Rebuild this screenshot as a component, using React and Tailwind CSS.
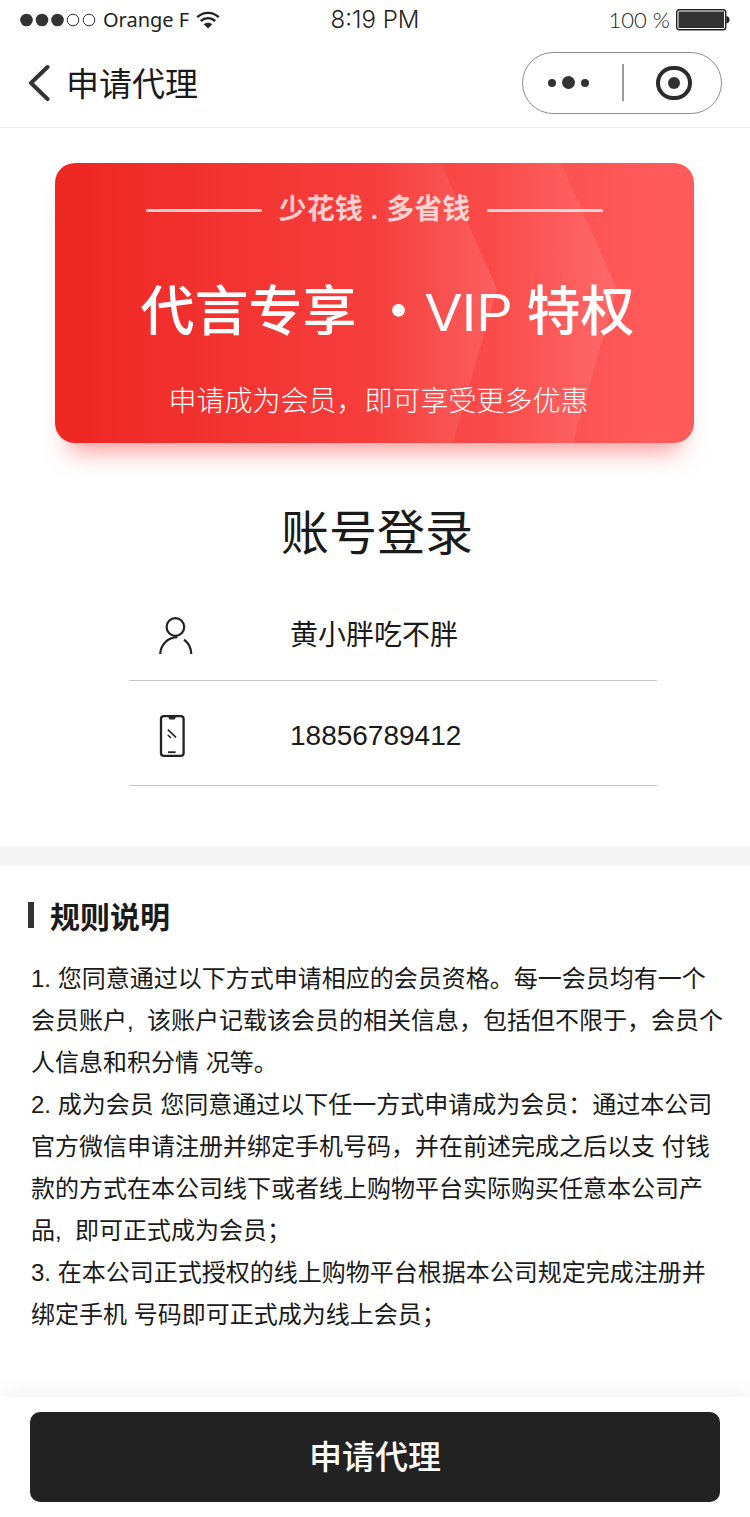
import { useState } from "react";

const rules = [
  "1. 您同意通过以下方式申请相应的会员资格。每一会员均有一个会员账户,\u00a0 该账户记载该会员的相关信息，包括但不限于，会员个人信息和积分情 况等。",
  "2. 成为会员 您同意通过以下任一方式申请成为会员：通过本公司官方微信申请注册并绑定手机号码，并在前述完成之后以支 付钱款的方式在本公司线下或者线上购物平台实际购买任意本公司产品,\u00a0 即可正式成为会员；",
  "3. 在本公司正式授权的线上购物平台根据本公司规定完成注册并绑定手机 号码即可正式成为线上会员；",
];

const StatusBar = () => (
  <div className="grid h-10 grid-cols-[1fr_auto_1fr] items-center pl-5 pr-5 text-[#222]">
    <div className="flex items-center gap-[7px]">
      <svg width="76" height="14" viewBox="0 0 76 14" aria-hidden="true">
        <circle cx="6.5" cy="7" r="6.3" fill="#333" />
        <circle cx="22" cy="7" r="6.3" fill="#333" />
        <circle cx="37.5" cy="7" r="6.3" fill="#333" />
        <circle cx="53" cy="7" r="5.8" fill="none" stroke="#333" />
        <circle cx="69" cy="7" r="5.8" fill="none" stroke="#333" />
      </svg>
      <span className="font-['Noto_Sans',sans-serif] text-[20px] leading-8">
        Orange F
      </span>
      <svg width="24" height="18" viewBox="0 0 24 18" aria-hidden="true">
        <g fill="none" stroke="#222" strokeWidth="2.4">
          <path d="M1.2 6.2C7.4 .4 16.6 .4 22.8 6.2" />
          <path d="M4.8 10C9 6.2 15 6.2 19.2 10" />
        </g>
        <path d="M7.8 13.2C10.2 11.2 13.8 11.2 16.2 13.2L12 17.6Z" fill="#222" />
      </svg>
    </div>
    <span className="font-['Inter',sans-serif] text-2xl font-light">8:19 PM</span>
    <div className="flex items-center justify-end gap-[5px]">
      <span className="font-['Lato',sans-serif] text-[22px] font-light leading-8">
        100 %
      </span>
      <svg width="55" height="22" viewBox="0 0 55 22" aria-hidden="true">
        <rect x="1.7" y=".7" width="49" height="20" rx="2.5" fill="#fff" stroke="#222" strokeWidth="1.4" />
        <rect x="3.5" y="2.5" width="45.5" height="16.5" fill="#333" />
        <path d="M51.4 7C55.6 7.4 55.6 14 51.4 14.4Z" fill="#222" />
      </svg>
    </div>
  </div>
);

const NavBar = () => (
  <header className="flex h-[88px] items-center justify-between border-b border-[#ececec] pb-[2px] pl-7 pr-7">
    <div className="flex items-center gap-4">
      <button type="button" aria-label="返回" onClick={() => window.history.back()}>
        <svg width="22" height="38" viewBox="0 0 22 38" aria-hidden="true">
          <path d="M19.5 3L3 19L19.5 35" fill="none" stroke="#333" strokeWidth="4" strokeLinecap="round" strokeLinejoin="round" />
        </svg>
      </button>
      <h1 className="pt-1 text-[33px] leading-10">申请代理</h1>
    </div>
    <div className="flex h-[62px] w-[200px] items-center rounded-full border border-[#8c8c8c]">
      <button type="button" aria-label="更多" className="flex w-[99px] items-center justify-center gap-[6px] pr-2">
        <span className="size-2 rounded-full bg-[#333]" />
        <span className="size-[13px] rounded-full bg-[#333]" />
        <span className="size-2 rounded-full bg-[#333]" />
      </button>
      <span className="h-[37px] w-[2px] bg-[#9b9b9b]" />
      <button type="button" aria-label="关闭" className="flex flex-1 justify-center pl-[2px]">
        <span className="flex h-[34px] w-9 items-center justify-center rounded-full border-4 border-[#2b2b2b]">
          <span className="size-3 rounded-full bg-[#333]" />
        </span>
      </button>
    </div>
  </header>
);

const Banner = () => (
  <section className="relative ml-[55px] mr-[56px] mt-[35px] flex flex-col items-center rounded-[20px] bg-linear-to-r from-[#ef2824] from-5% via-[#f63e3d] via-50% to-[#ff5b5b] to-95% pb-[21px] pt-[27px] text-white shadow-[0_22px_24px_-14px_rgba(244,50,50,0.5)]">
    <svg className="absolute right-0 top-0 h-full" width="639" height="280" viewBox="0 0 639 280" aria-hidden="true">
      <defs>
        <linearGradient id="arrow" x1="0" x2="1" y1="0" y2="0">
          <stop offset="0.2" stopColor="#fff" stopOpacity="0" />
          <stop offset="1" stopColor="#fff" stopOpacity="0.11" />
        </linearGradient>
      </defs>
      <path d="M286 0H386L442 126L398 280H286Z" fill="url(#arrow)" />
      <path d="M406 0H506L562 126L518 280H406Z" fill="url(#arrow)" />
    </svg>
    <div className="relative flex items-center gap-[17px]">
      <span className="h-[3px] w-[116px] rounded-full bg-white/75" />
      <p className="text-[28px] font-bold leading-10 text-white/75">少花钱 . 多省钱</p>
      <span className="h-[3px] w-[116px] rounded-full bg-white/75" />
    </div>
    <h2 className="relative mt-[42px] pl-[26px] text-[54px] font-medium leading-[80px]">
      代言专享 ・VIP 特权
    </h2>
    <p className="relative mt-[30px] pl-2 text-[28px] font-light leading-10">
      申请成为会员，即可享受更多优惠
    </p>
  </section>
);

const UserIcon = () => (
  <svg width="34" height="38" viewBox="0 0 34 38" fill="none" stroke="#222" strokeWidth="2.2" aria-hidden="true">
    <circle cx="16.4" cy="10" r="8.8" />
    <path d="M1.2 37C1.6 28 8.5 20.4 18.4 20.2" />
    <path d="M25 22.6C29.6 26 32.2 31 32.3 37" />
  </svg>
);

const PhoneIcon = () => (
  <svg width="34" height="42" viewBox="0 0 34 42" fill="none" stroke="#222" strokeWidth="2.3" aria-hidden="true">
    <rect x="2" y="1.2" width="22.6" height="39.6" rx="2.8" />
    <path d="M9.2 1.5H17L15.8 4.4H10.4Z" fill="#222" stroke="none" />
    <path d="M9 37.2H16.6" strokeWidth="1.8" />
    <path d="M8.8 14.6L17 22.4M8.8 20L12 23" strokeWidth="1.6" />
  </svg>
);

export default function App() {
  const [name, setName] = useState("黄小胖吃不胖");
  const [phone, setPhone] = useState("18856789412");

  const handleSubmit = (event) => {
    event.preventDefault();
  };

  return (
    <div className="bg-white font-['Liberation_Sans','Noto_Sans_CJK_SC',sans-serif] text-[#1a1a1a]" lang="zh-CN">
      <StatusBar />
      <NavBar />
      <Banner />

      <form id="apply" onSubmit={handleSubmit} className="pb-[60px] pl-[129px] pr-[93px] pt-[60px]">
        <h2 className="pr-8 text-center text-5xl leading-[62px]">账号登录</h2>
        <div className="mt-[26px] flex h-[90px] items-center border-b border-[#c9c9c9] pl-[30px]">
          <label htmlFor="name" aria-label="姓名">
            <UserIcon />
          </label>
          <input
            id="name"
            type="text"
            className="ml-[97px] min-w-0 flex-1 text-[28px] leading-10 outline-none"
            value={name}
            onChange={(e) => setName(e.target.value)}
          />
        </div>
        <div className="flex h-[105px] items-center border-b border-[#c9c9c9] pl-[30px] pt-[6px]">
          <label htmlFor="phone" aria-label="手机号">
            <PhoneIcon />
          </label>
          <input
            id="phone"
            type="tel"
            className="ml-[97px] min-w-0 flex-1 text-[28px] leading-10 outline-none"
            value={phone}
            onChange={(e) => setPhone(e.target.value)}
          />
        </div>
      </form>

      <div className="h-5 bg-[#f4f4f4]" />

      <section className="pb-[61px] pl-7 pr-6 pt-[31px]">
        <div className="flex items-start gap-4">
          <span className="mt-[5px] h-[26px] w-[6px] bg-[#333]" />
          <h2 className="text-[30px] font-bold leading-[42px]">规则说明</h2>
        </div>
        <div className="mt-[19px] pl-[3px] text-2xl leading-[42px]">
          {rules.map((rule) => (
            <p key={rule}>{rule}</p>
          ))}
        </div>
      </section>

      <footer className="bg-white px-[30px] py-[15px] shadow-[0_-4px_20px_rgba(0,0,0,0.06)]">
        <button
          type="submit"
          form="apply"
          className="h-[90px] w-full rounded-[10px] bg-[#222] pt-[2px] text-[33px] font-medium text-white"
        >
          申请代理
        </button>
      </footer>
    </div>
  );
}
